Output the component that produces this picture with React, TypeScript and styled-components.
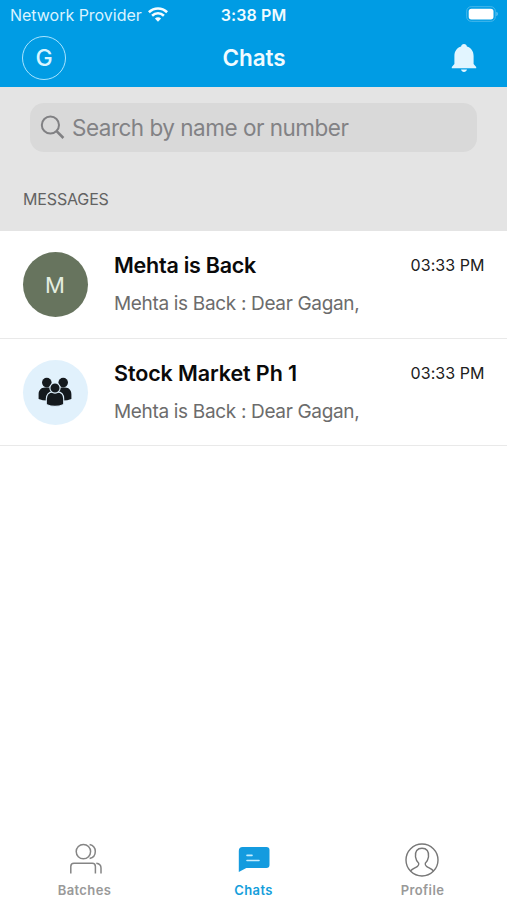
import React from "react";
import styled, { createGlobalStyle } from "styled-components";

const GlobalStyle = createGlobalStyle`
  * { box-sizing: border-box; }
  body { margin: 0; background: #fff; font-family: Inter, "Liberation Sans", sans-serif; }
  svg { display: block; flex: none; }
`;

const Screen = styled.div`
  width: 507px;
  height: 900px;
  display: flex;
  flex-direction: column;
  background: #fff;
  overflow: hidden;
`;

const TopBar = styled.header`
  height: 87px;
  background: #009ce4;
  color: #f0fbff;
`;

const StatusBar = styled.div`
  height: 30px;
  padding: 0 9px 0 10px;
  display: grid;
  grid-template-columns: 1fr auto 1fr;
  align-items: center;
`;

const Carrier = styled.div`
  display: flex;
  align-items: center;
  gap: 6px;
  font-size: 16px;
  line-height: 20px;
  letter-spacing: -0.02px;
  white-space: nowrap;
  color: #d9f3ff;

  svg {
    margin-top: -2px;
  }
`;

const Clock = styled.div`
  margin-right: 1px;
  font-size: 16px;
  line-height: 20px;
  font-weight: 600;
  letter-spacing: 0.1px;
`;

const Battery = styled.div`
  justify-self: end;
  margin-top: -2px;
`;

const NavBar = styled.div`
  height: 57px;
  padding: 0 30px 0 22px;
  display: grid;
  grid-template-columns: 1fr auto 1fr;
  align-items: center;
`;

const AccountButton = styled.button`
  width: 44px;
  height: 44px;
  margin-top: -2px;
  padding: 0;
  border: 1.5px solid #a9e4ff;
  border-radius: 50%;
  background: none;
  color: #d9f5ff;
  font: 500 23px/40px Inter, sans-serif;
`;

const Title = styled.h1`
  margin: 0 0 2px 9px;
  font-size: 22.5px;
  line-height: 28px;
  font-weight: 600;
  letter-spacing: -0.1px;
`;

const BellButton = styled.button`
  justify-self: end;
  padding: 0;
  margin-top: -1px;
  border: 0;
  background: none;
`;

const ListHeader = styled.section`
  height: 144px;
  padding: 16px 30px 0;
  background: #e4e4e4;
`;

const SearchField = styled.div`
  height: 49px;
  padding: 0 10px;
  display: flex;
  align-items: center;
  gap: 7px;
  border-radius: 14px;
  background: #d9d9d9;
  color: #828285;
  font-size: 22.5px;
  line-height: 28px;
  letter-spacing: -0.5px;
  white-space: nowrap;
`;

const SectionTitle = styled.h2`
  margin: 37px 0 0 -7px;
  font-size: 16px;
  line-height: 20px;
  font-weight: 400;
  letter-spacing: -0.15px;
  color: #626262;
`;

const ChatList = styled.main`
  flex: 1;
`;

const ChatRow = styled.article`
  height: 107.5px;
  padding: 0 22.5px;
  display: flex;
  border-bottom: 1.5px solid #e9e9e9;
`;

const Avatar = styled.div<{ $tone: string }>`
  width: 65px;
  height: 65px;
  margin-top: 21px;
  display: flex;
  align-items: center;
  justify-content: center;
  border-radius: 50%;
  background: ${(p) => p.$tone};
  color: #e4eee0;
  font-size: 22px;
  line-height: 28px;
`;

const ChatText = styled.div`
  flex: 1;
  padding: 20px 0 0 26.5px;
  white-space: nowrap;
`;

const ChatName = styled.div<{ $tracking: number }>`
  font-size: 21.5px;
  line-height: 28px;
  font-weight: 600;
  letter-spacing: ${(p) => p.$tracking}px;
  color: #0a0a0a;
`;

const Preview = styled.div`
  margin-top: 13px;
  font-size: 19px;
  line-height: 24px;
  letter-spacing: -0.33px;
  color: #6c6c6c;
`;

const Time = styled.time`
  padding-top: 24px;
  font-size: 16px;
  line-height: 20px;
  letter-spacing: 0.05px;
  color: #202020;
`;

const TabBar = styled.nav`
  height: 66px;
  display: grid;
  grid-template-columns: repeat(3, 1fr);
`;

const Tab = styled.a<{ $active?: boolean }>`
  padding-top: 9px;
  display: flex;
  flex-direction: column;
  align-items: center;
  color: ${(p) => (p.$active ? "#149edb" : "#999")};
  font-size: 13px;
  line-height: 16px;
  font-weight: 600;
  letter-spacing: 0.4px;
`;

const TabIcon = styled.div<{ $nudge?: number }>`
  height: 39px;
  margin-left: ${(p) => p.$nudge ?? 0}px;
`;

const WifiIcon = () => (
  <svg width="20" height="15" viewBox="0 0 20 15" fill="none" stroke="#f5fcff" strokeWidth="2.6">
    <path d="M.9 5.2C6.2.2 13.8.2 19.1 5.2M4.1 8.7c3.4-3.2 8.4-3.2 11.8 0" />
    <path d="M6.9 11.6c1.8-1.7 4.4-1.7 6.2 0L10 14.8z" fill="#f5fcff" stroke="none" />
  </svg>
);

const BatteryIcon = () => (
  <svg width="32" height="16" viewBox="0 0 32 16">
    <rect x=".7" y=".7" width="28.6" height="14.6" rx="4.5" fill="none" stroke="#48b8eb" />
    <rect x="2.7" y="2.8" width="24.8" height="10.6" rx="2.7" fill="#fff" />
    <path d="M30.3 5.8q1.6.6 1.6 2.2t-1.6 2.2z" fill="#60c4f1" />
  </svg>
);

const BellIcon = () => (
  <svg width="26" height="30" viewBox="0 0 26 30" fill="#e2f5ff">
    <path d="M13 1c-1.7 0-2.7 1-2.9 2.6C5.9 4.8 3.4 8.3 3.4 13v8L.8 24v1.2h24.4V24l-2.6-3v-8c0-4.7-2.5-8.2-6.7-9.4C15.7 2 14.7 1 13 1zM10 26.6h6c-.4 1.6-1.5 2.5-3 2.5s-2.6-.9-3-2.5z" />
  </svg>
);

const SearchIcon = () => (
  <svg width="25" height="25" viewBox="0 0 25 25" fill="none" stroke="#808083" strokeWidth="2">
    <circle cx="10.4" cy="10" r="8.6" />
    <path d="m16.6 16.2 6.8 6.8" strokeWidth="2.6" />
  </svg>
);

const GroupIcon = () => (
  <svg width="34" height="30" viewBox="0 0 34 30" fill="#14191d">
    <circle cx="8.8" cy="5.6" r="4.8" />
    <circle cx="25.2" cy="5.6" r="4.8" />
    <path d="M.6 22v-4.6c0-4 2.4-6.8 6.4-6.8h4c4 0 6.4 2.8 6.4 6.8V22q-8.4 3-16.8 0zM16.6 22v-4.6c0-4 2.4-6.8 6.4-6.8h4c4 0 6.4 2.8 6.4 6.8V22q-8.4 3-16.8 0z" />
    <g stroke="#dceefa" strokeWidth="1.1">
      <path d="M8.3 27.5v-5.4c0-4.4 2.4-7.2 6.5-7.2h4.4c4.1 0 6.5 2.8 6.5 7.2v5.4q-8.7 3.8-17.4 0z" />
      <circle cx="17" cy="11" r="5.1" />
    </g>
  </svg>
);

const BatchesIcon = () => (
  <svg width="32" height="32" viewBox="0 0 32 32" fill="none" stroke="#858585" strokeWidth="1.5">
    <circle cx="13.4" cy="8.6" r="7.2" />
    <path d="M19.6 1.6c7.6 1.7 7.6 12.3 0 14M.8 30.5v-7.1q0-3.2 3.2-3.2h18.2q3.2 0 3.2 3.2v7.1M26.3 20.2q4.7.5 4.7 4.7v5.6" />
  </svg>
);

const ChatIcon = () => (
  <svg width="32" height="32" viewBox="0 0 32 32">
    <path d="M4.6 4h23.8Q31.5 4 31.5 7v15q0 3-3.1 3H8.3L.8 29V8q0-4 3.8-4z" fill="#149bdf" />
    <path d="M9 12.4h5M9 17.5h12" stroke="#c5edff" strokeWidth="1.6" strokeLinecap="round" />
  </svg>
);

const ProfileIcon = () => (
  <svg width="34" height="34" viewBox="0 0 34 34" fill="none" stroke="#777" strokeWidth="1.4">
    <circle cx="17" cy="17" r="16" />
    <path d="M5.5 28c2.1-2.5 4.2-2.8 7-4.6q1.6-1 1.2-3.2c-2-1.7-2.8-3.6-3.2-6.3-.7-5.6 1.8-8.6 6.5-8.6s7.2 3 6.5 8.6c-.4 2.7-1.2 4.6-3.2 6.3q-.4 2.2 1.2 3.2c2.8 1.8 4.9 2.1 7 4.6" />
  </svg>
);

const chats = [
  { name: "Mehta is Back", tracking: -0.25, tone: "#67745e", avatar: "M" as React.ReactNode },
  { name: "Stock Market Ph 1", tracking: -0.1, tone: "#e1f1fc", avatar: <GroupIcon /> },
];

export default function App() {
  return (
    <Screen>
      <GlobalStyle />
      <TopBar>
        <StatusBar>
          <Carrier><span>Network Provider</span><WifiIcon /></Carrier>
          <Clock>3:38 PM</Clock>
          <Battery><BatteryIcon /></Battery>
        </StatusBar>
        <NavBar>
          <AccountButton>G</AccountButton>
          <Title>Chats</Title>
          <BellButton aria-label="Notifications"><BellIcon /></BellButton>
        </NavBar>
      </TopBar>
      <ListHeader>
        <SearchField><SearchIcon /><span>Search by name or number</span></SearchField>
        <SectionTitle>MESSAGES</SectionTitle>
      </ListHeader>
      <ChatList>
        {chats.map((chat) => (
          <ChatRow key={chat.name}>
            <Avatar $tone={chat.tone}>{chat.avatar}</Avatar>
            <ChatText>
              <ChatName $tracking={chat.tracking}>{chat.name}</ChatName>
              <Preview>Mehta is Back : Dear Gagan,</Preview>
            </ChatText>
            <Time>03:33 PM</Time>
          </ChatRow>
        ))}
      </ChatList>
      <TabBar>
        <Tab><TabIcon $nudge={2}><BatchesIcon /></TabIcon><span>Batches</span></Tab>
        <Tab $active><TabIcon><ChatIcon /></TabIcon><span>Chats</span></Tab>
        <Tab><TabIcon $nudge={-2}><ProfileIcon /></TabIcon><span>Profile</span></Tab>
      </TabBar>
    </Screen>
  );
}
